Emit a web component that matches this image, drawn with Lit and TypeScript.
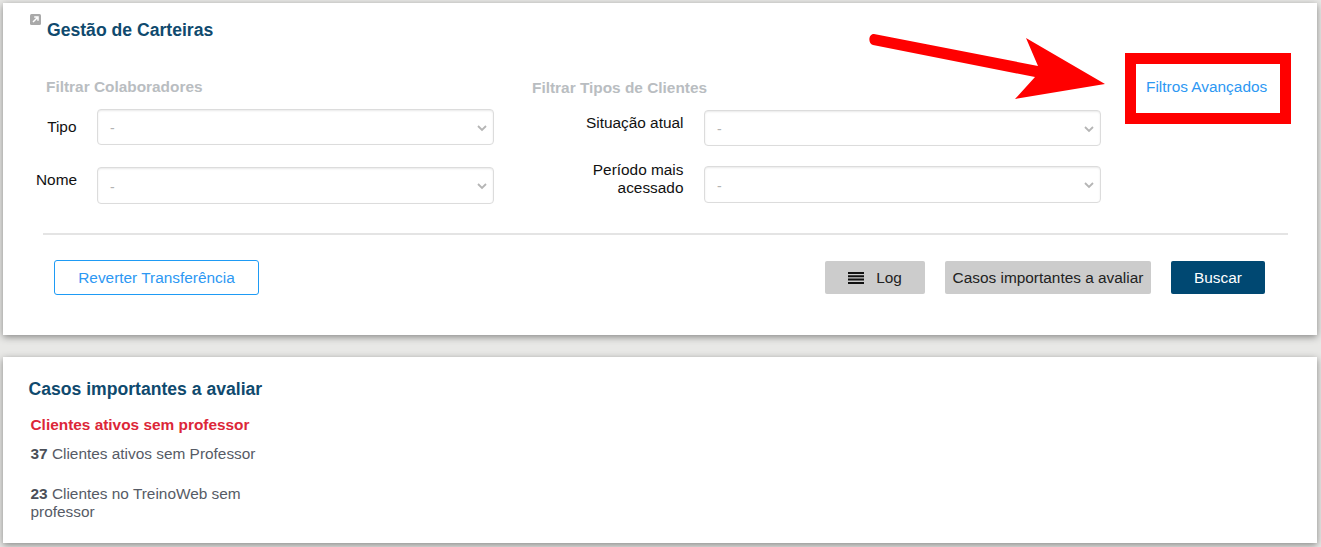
import { LitElement, html, css, svg } from "lit";
import { customElement } from "lit/decorators.js";

const chevron = html`<svg class="chev" width="10" height="7" viewBox="0 0 10 7"><path d="M1 1l4 4 4-4" fill="none" stroke="#b5b5b5" stroke-width="1.8"/></svg>`;
const sel = (cls: string) => html`<div class="select ${cls}"><span class="dash">-</span>${chevron}</div>`;

@customElement("app-root")
export class AppRoot extends LitElement {
  static styles = css`
    :host { display: block; box-sizing: border-box; height: 547px; overflow: hidden; padding: 3px 4px 0 3px; background: #e8e8e6; font-family: "Liberation Sans", Arial, sans-serif; font-size: 15.4px; color: #111; }
    * { box-sizing: border-box; }
    .card { background: #fff; box-shadow: 0 2px 7px rgba(0,0,0,.42); position: relative; }
    .top { height: 332px; padding-top: 17px; }
    .bottom { height: 186px; margin-top: 22px; padding: 22px 0 0 25.500px; }
    .ext { position: absolute; left: 27px; top: 11px; width: 11px; height: 11px; }
    h2 { margin: 0; font-size: 17.6px; line-height: 20px; font-weight: 700; color: #0f4a6e; }
    .top h2 { margin-left: 44px; }
    .filters { display: flex; margin: 39px 0 0 33px; }
    .col1 { width: 458px; }
    .col2 { width: 569px; margin-left: 38px; padding-top: 1px; }
    .grid { display: grid; column-gap: 20px; }
    .col1 .grid { grid-template-columns: 41px 397px; row-gap: 22px; }
    .col2 .grid { grid-template-columns: 152px 397px; row-gap: 20px; }
    h3 { margin: 0 0 14px; font-size: 15.4px; line-height: 16px; font-weight: 700; color: #b9bdc1; }
    .col1 h3 { margin-left: 10px; }
    label { text-align: right; line-height: 18px; white-space: nowrap; padding-right: 0.500px; }
    .col1 label.a { padding-top: 9px; }
    .col1 label.b { padding-top: 4px; }
    .col2 label.a { padding-top: 4px; }
    .col2 label.b { margin-top: -5px; }
    .select { height: 36px; border: 1px solid #dcdcdc; border-radius: 4px; box-shadow: inset 0 1px 2px rgba(0,0,0,.09); display: flex; align-items: center; justify-content: space-between; padding: 2px 6px 0 12px; }
    .select.tall { height: 37px; }
    .dash { color: #b3b3b3; font-size: 14px; }
    .chev { display: block; }
    .link { margin: 0 0 0 45px; color: #2d98f3; line-height: 16px; white-space: nowrap; }
    hr { border: 0; height: 2px; background: #e4e4e4; margin: 29px 29px 0 40px; }
    .actions { display: flex; align-items: center; margin: 25px 52px 0 51px; }
    button { font: inherit; border-radius: 2px; border: 0; height: 33px; padding: 0; display: inline-flex; align-items: center; justify-content: center; color: #222; }
    .revert { width: 205px; height: 35px; background: #fff; border: 1px solid #1e9bf5; border-radius: 3px; color: #2d98f3; margin-right: auto; }
    .log { width: 100px; background: #ccc; gap: 12px; margin-right: 20px; }
    .casos { width: 206px; background: #ccc; margin-right: 20px; }
    .buscar { width: 94px; background: #004872; color: #fff; }
    .red { margin: 17px 0 0 2px; line-height: 18px; font-weight: 700; color: #dc2638; }
    .item { margin: 11px 0 0 2px; width: 240px; line-height: 18px; color: #565b66; }
    .item + .item { margin-top: 22px; }
    .item b { color: #4b4f58; }
    .overlay { position: absolute; left: 0; top: 0; pointer-events: none; }
    .redbox { position: absolute; left: 1122px; top: 50px; width: 166px; height: 71px; border: 11px solid #f00; }
  `;

  render() {
    return html`
      <section class="card top">
        <svg class="ext" viewBox="0 0 11 11"><rect width="11" height="11" rx="1.5" fill="#a9a9a9"/><path d="M3 8l4-4M4.2 3h3.8v3.8" fill="none" stroke="#fff" stroke-width="1.5"/></svg>
        <h2>Gestão de Carteiras</h2>
        <div class="filters">
          <div class="col1">
            <h3>Filtrar Colaboradores</h3>
            <div class="grid">
              <label class="a">Tipo</label>${sel("")}
              <label class="b">Nome</label>${sel("tall")}
            </div>
          </div>
          <div class="col2">
            <h3>Filtrar Tipos de Clientes</h3>
            <div class="grid">
              <label class="a">Situação atual</label>${sel("")}
              <label class="b">Período mais<br />acessado</label>${sel("tall")}
            </div>
          </div>
          <a class="link">Filtros Avançados</a>
        </div>
        <hr />
        <div class="actions">
          <button class="revert">Reverter Transferência</button>
          <button class="log"><svg width="16" height="12" viewBox="0 0 16 12"><path d="M0 0h16v2H0zM0 3.300h16v2H0zM0 6.600h16v2H0zM0 10h16v2H0z" fill="#111"/></svg>Log</button>
          <button class="casos">Casos importantes a avaliar</button>
          <button class="buscar">Buscar</button>
        </div>
        <div class="redbox"></div>
        <svg class="overlay" width="1314" height="140" viewBox="3 3 1314 140">${svg`<path d="M874 34 1038 66 1026 38 1105 84 1015 99 1035 77 873 45C868 44 868 34 874 34Z" fill="#f00"/>`}</svg>
      </section>
      <section class="card bottom">
        <h2>Casos importantes a avaliar</h2>
        <div class="red">Clientes ativos sem professor</div>
        <div class="item"><b>37</b> Clientes ativos sem Professor</div>
        <div class="item"><b>23</b> Clientes no TreinoWeb sem professor</div>
      </section>
    `;
  }
}
